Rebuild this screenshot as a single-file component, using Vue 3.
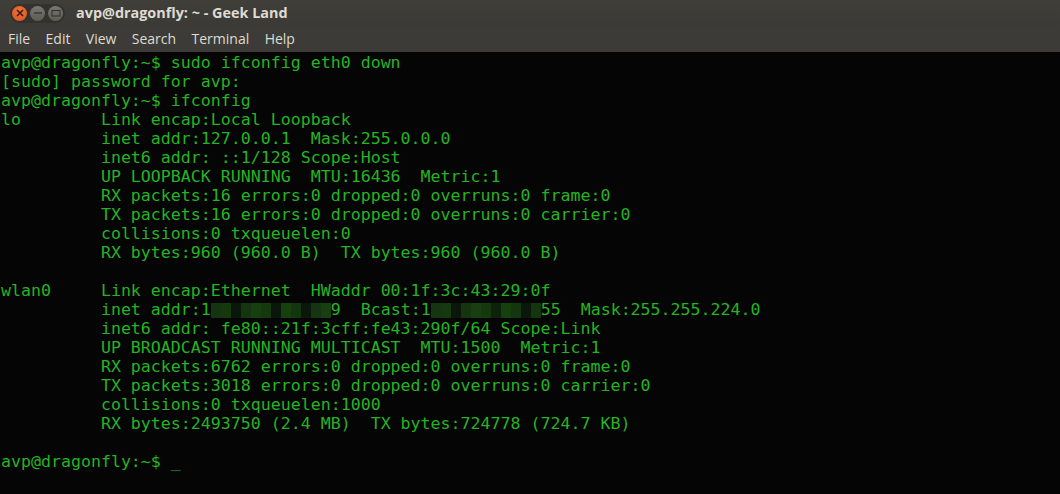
<script setup>
const indent = ' '.repeat(10)
const lines = [
  'avp@dragonfly:~$ sudo ifconfig eth0 down',
  '[sudo] password for avp:',
  'avp@dragonfly:~$ ifconfig',
  'lo' + ' '.repeat(8) + 'Link encap:Local Loopback',
  indent + 'inet addr:127.0.0.1  Mask:255.0.0.0',
  indent + 'inet6 addr: ::1/128 Scope:Host',
  indent + 'UP LOOPBACK RUNNING  MTU:16436  Metric:1',
  indent + 'RX packets:16 errors:0 dropped:0 overruns:0 frame:0',
  indent + 'TX packets:16 errors:0 dropped:0 overruns:0 carrier:0',
  indent + 'collisions:0 txqueuelen:0',
  indent + 'RX bytes:960 (960.0 B)  TX bytes:960 (960.0 B)',
  '',
  'wlan0     Link encap:Ethernet  HWaddr 00:1f:3c:43:29:0f',
  null,
  indent + 'inet6 addr: fe80::21f:3cff:fe43:290f/64 Scope:Link',
  indent + 'UP BROADCAST RUNNING MULTICAST  MTU:1500  Metric:1',
  indent + 'RX packets:6762 errors:0 dropped:0 overruns:0 frame:0',
  indent + 'TX packets:3018 errors:0 dropped:0 overruns:0 carrier:0',
  indent + 'collisions:0 txqueuelen:1000',
  indent + 'RX bytes:2493750 (2.4 MB)  TX bytes:724778 (724.7 KB)',
  '',
  'avp@dragonfly:~$ _',
]
const menus = ['File', 'Edit', 'View', 'Search', 'Terminal', 'Help']
const blurA = ['#14350f', '#15380f', '#0a170a', '#14350f', '#183f10', '#15380f', '#0a170a', '#17400f', '#14360f', '#0a170a', '#14350f', '#183f10']
const blurB = ['#14350f', '#15380f', '#0a170a', '#14350f', '#183f10', '#15380f', '#0d220b', '#17400f', '#14360f', '#0a170a', '#14350f']
const before = indent + 'inet addr:1'
const middle = '9  Bcast:1'
const after = '55  Mask:255.255.224.0'
</script>

<template>
  <div class="window">
    <header class="titlebar">
      <div class="controls">
        <span class="btn close">
          <svg width="10" height="10" viewBox="0 0 10 10"><path d="M2 2l6 6M8 2l-6 6" stroke="#3a1a0a" stroke-width="1.6" /></svg>
        </span>
        <span class="btn">
          <svg width="10" height="10" viewBox="0 0 10 10"><path d="M1 5h8" stroke="#38372f" stroke-width="1.4" /></svg>
        </span>
        <span class="btn">
          <svg width="10" height="10" viewBox="0 0 10 10"><rect x="1" y="2.5" width="8" height="5.5" fill="none" stroke="#38372f" stroke-width="1.2" /></svg>
        </span>
      </div>
      <div class="title">avp@dragonfly: ~ - Geek Land</div>
    </header>
    <nav class="menubar">
      <span v-for="m in menus" :key="m" class="menu">{{ m }}</span>
    </nav>
    <main class="term">
      <template v-for="(l, i) in lines" :key="i">
        <div v-if="l !== null" class="line" v-text="l"></div>
        <div v-else class="line"><span v-text="before"></span><span class="blur"><i v-for="(c, n) in blurA" :key="n" :style="{ background: c }"></i></span><span v-text="middle"></span><span class="blur"><i v-for="(c, n) in blurB" :key="n" :style="{ background: c }"></i></span><span v-text="after"></span></div>
      </template>
    </main>
  </div>
</template>

<style scoped>
.window { width: 1060px; height: 494px; display: flex; flex-direction: column; overflow: hidden; background: #050505; }
.titlebar { height: 26px; display: flex; align-items: center; background: linear-gradient(#3f3e39, #3b3a36); }
.controls { display: flex; gap: 3px; padding: 2px 2px; margin-left: 10px; border-radius: 10px; background: #33322e; }
.btn { width: 15px; height: 15px; border-radius: 50%; background: linear-gradient(#7a7971, #5c5b54); display: flex; align-items: center; justify-content: center; }
.close { background: radial-gradient(circle at 50% 35%, #f0743c, #d9501e); }
.title { margin-left: 11px; font: bold 14.4px/26px "Open Sans", "Noto Sans", sans-serif; color: #dfdbd2; }
.menubar { height: 26px; display: flex; align-items: center; padding-left: 8px; gap: 15.4px; background: #3c3b37; }
.menu { font: 14px/26px "Open Sans", "Noto Sans", sans-serif; color: #dfdbd2; }
.term { flex: 1; padding: 1px 0 0 1px; background: #050505; color: #25b323; font: 16.6px/19px "DejaVu Sans Mono", monospace; white-space: pre; }
.line { height: 19px; display: flex; }
.blur { display: flex; width: 120px; height: 15px; margin-top: 3px; }
.blur + span + .blur { width: 110px; }
.blur i { flex: 1; }
</style>
